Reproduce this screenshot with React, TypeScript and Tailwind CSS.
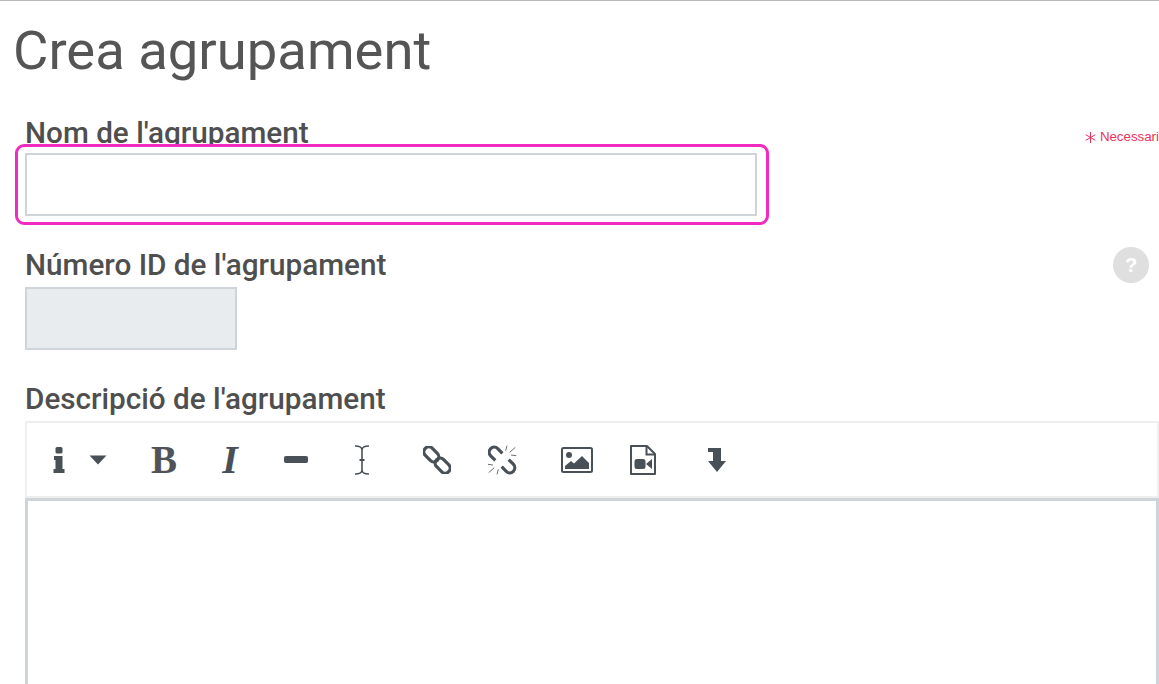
import type { ReactNode } from "react";

const ink = "#495057";

function Cell({ w = "w-[66px]", children }: { w?: string; children: ReactNode }) {
  return <div className={`${w} h-full flex items-center justify-center`}>{children}</div>;
}

function InfoIcon() {
  return (
    <svg width="12" height="26" viewBox="0 0 12 26" fill={ink}>
      <rect x="2.5" y="0" width="7" height="6.5" rx="1.5" />
      <path d="M1 9h8.5v13H11.5v4H.5v-4H2.5v-9H1z" />
    </svg>
  );
}
function Caret() {
  return (
    <svg width="18" height="10" viewBox="0 0 18 10" fill={ink}>
      <path d="M0.5 0.5h17L9 9.5z" />
    </svg>
  );
}
function Dash() {
  return <div className="w-[24px] h-[7px] rounded-[2px] bg-[#495057]" />;
}
function Cursor() {
  return (
    <svg width="16" height="30" viewBox="0 0 16 30" fill="none" stroke={ink} strokeWidth="1.6">
      <path d="M1 1c4 0 7 .5 7 4v20c0 3.500-3 4-7 4M15 1c-4 0-7 .5-7 4v20c0 3.500 3 4 7 4" />
      <path d="M5.500 15h5" strokeWidth="2" />
    </svg>
  );
}
function LinkIcon() {
  return (
    <svg width="28" height="28" viewBox="0 0 28 28" fill="none" stroke={ink} strokeWidth="3.200">
      <g transform="rotate(45 14 14)">
        <rect x="-2.500" y="9" width="17" height="10" rx="5" />
        <rect x="13.500" y="9" width="17" height="10" rx="5" />
      </g>
    </svg>
  );
}
function UnlinkIcon() {
  return (
    <svg width="30" height="30" viewBox="0 0 30 30" fill="none" stroke={ink}>
      <g transform="rotate(45 14 15)" strokeWidth="3.200">
        <path d="M9.500 10H3a5 5 0 0 0 0 10h6.500" />
        <path d="M18.500 10H25a5 5 0 0 1 0 10h-6.500" />
      </g>
      <g strokeWidth="1" stroke="#6b6f75">
        <path d="M19 .7 17.700 5.700M27.300 2.300 21.700 7.300M28.300 10.700 23 10" />
        <path d="M9 29.300 10.300 24.300M.7 27.700 6.300 22.700M-.3 19.300 5 20" />
      </g>
    </svg>
  );
}
function ImageIcon() {
  return (
    <svg width="32" height="26" viewBox="0 0 32 26" fill={ink}>
      <rect x="1" y="1" width="30" height="24" rx="1.500" fill="none" stroke={ink} strokeWidth="2" />
      <circle cx="8" cy="8" r="3" />
      <path d="M4 22v-3l6-5 3 2.500L21 9l7 7v6z" />
    </svg>
  );
}
function FileVideo() {
  return (
    <svg width="26" height="30" viewBox="0 0 26 30" fill={ink}>
      <path d="M1 1h16l8 8v20H1z" fill="none" stroke={ink} strokeWidth="2" strokeLinejoin="round" />
      <path d="M16.500 1v8.500H25" fill="none" stroke={ink} strokeWidth="2" />
      <rect x="4.500" y="14" width="11" height="10" rx="2.500" />
      <path d="M16 19l6-5v10z" />
    </svg>
  );
}
function LevelDown() {
  return (
    <svg width="18" height="24" viewBox="0 0 18 24" fill={ink}>
      <path d="M0 0h13v13h5l-9 11-9-11h5V4H0z" transform="translate(0 0)" />
    </svg>
  );
}
function StarMark() {
  return (
    <svg width="11" height="11" viewBox="0 0 11 11" fill="none" stroke="#ee2f59" strokeWidth="1">
      <path d="M5.500 0v11M.7 2.700l9.600 5.600M10.300 2.700.7 8.300" />
    </svg>
  );
}

const label = "text-[29.7px] leading-[36px] font-medium text-[#4f4f4f] whitespace-nowrap";

export default function App() {
  return (
    <div className="w-[1159px] h-[684px] overflow-hidden bg-white border-t border-[#b8b8b8] font-['Roboto',sans-serif]">
      <h1 className="ml-[13px] mt-[18px] h-[64px] text-[54.400px] leading-[64px] font-normal text-[#555555]">Crea agrupament</h1>

      <div className="flex justify-between items-start mt-[32px] h-[32px] pl-[25px]">
        <div className={label}>Nom de l'agrupament</div>
        <div className="mt-[14px] flex items-center gap-[4px] text-[13.300px] leading-[16px] text-[#ee2f59] whitespace-nowrap font-['Liberation_Sans',sans-serif]">
          <StarMark />
          Necessari
        </div>
      </div>
      <div className="relative ml-[15px] w-[754px] h-[81px] -mt-[3px] border-[3px] border-[#f22bc0] rounded-[9px] bg-white pt-[6px] pl-[7px]">
        <div className="w-[732px] h-[63px] border-2 border-[#ced4da]" />
      </div>

      <div className="flex justify-between items-center mt-[22px] pl-[25px] pr-[10px] h-[36px]">
        <div className={label}>Número ID de l'agrupament</div>
        <div className="flex w-[36px] h-[36px] rounded-full bg-[#dfdfdf] items-center justify-center text-white text-[20px] font-black font-['Liberation_Sans',sans-serif]">?</div>
      </div>
      <div className="ml-[25px] mt-[4px] w-[212px] h-[63px] bg-[#e9ecef] border-2 border-[#ced4da]" />

      <div className={`ml-[25px] mt-[31px] h-[40px] ${label}`}>Descripció de l'agrupament</div>
      <div className="ml-[25px] w-[1134px] h-[77px] border-2 border-[#eeeeee] flex items-center">
        <div className="flex h-full items-center">
          <div className="w-[104px] h-full flex items-center justify-center gap-[24px] pl-[2px]">
            <InfoIcon />
            <Caret />
          </div>
          <Cell><span className="font-['Liberation_Serif',serif] font-bold text-[39px] leading-none text-[#505458]">B</span></Cell>
          <Cell><span className="font-['Liberation_Serif',serif] italic text-[40px] leading-none text-[#495057] font-bold">I</span></Cell>
          <Cell><Dash /></Cell>
          <Cell><Cursor /></Cell>
        </div>
        <div className="flex h-full items-center ml-[9px]">
          <Cell><LinkIcon /></Cell>
          <Cell><UnlinkIcon /></Cell>
        </div>
        <div className="flex h-full items-center ml-[8px]">
          <Cell><ImageIcon /></Cell>
          <Cell><FileVideo /></Cell>
        </div>
        <div className="flex h-full items-center ml-[8px]">
          <Cell><LevelDown /></Cell>
        </div>
      </div>
      <div className="ml-[25px] w-[1134px] h-[200px] border-[3px] border-[#ced4da] border-b-0 bg-white" />
    </div>
  );
}
